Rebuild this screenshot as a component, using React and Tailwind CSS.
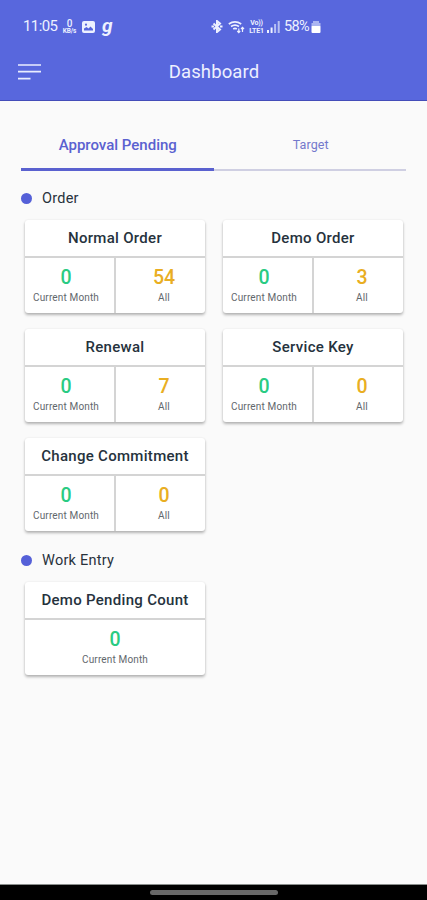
import React, { useState } from 'react';

const ORDERS = [
    { id: 'normal', title: 'Normal Order', current: 0, all: 54 },
    { id: 'demo', title: 'Demo Order', current: 0, all: 3 },
    { id: 'renewal', title: 'Renewal', current: 0, all: 7 },
    { id: 'service', title: 'Service Key', current: 0, all: 0 },
    { id: 'commitment', title: 'Change Commitment', current: 0, all: 0 },
];

const WORK_ENTRIES = [
    { id: 'demo-pending', title: 'Demo Pending Count', current: 0 },
];

export default function App() {
    const [tab, setTab] = useState('approval');

    return (
        <div className="flex h-[900px] w-[427px] flex-col overflow-hidden bg-[#fafafa] font-['Roboto',sans-serif]">
            <header className="h-[101px] shrink-0 border-b border-[#444db9] bg-[#5867dd]">
                <StatusBar />
                <div className="grid h-11 grid-cols-[1fr_auto_1fr] items-center px-[18px]">
                    <button aria-label="Menu" className="w-6">
                        <svg width="24" height="18" viewBox="0 0 24 18" fill="none" stroke="#e9edff" strokeWidth="1.7">
                            <path d="M0 2h23M0 8.7h23M0 15.7h12.5" />
                        </svg>
                    </button>
                    <h1 className="pt-[2px] pl-px text-[18.5px] tracking-[0.1px] text-[#edf0ff]">Dashboard</h1>
                </div>
            </header>

            <main className="flex-1 px-[21px] pt-[20px]">
                <nav className="flex h-[50px]">
                    <Tab label="Approval Pending" active={tab === 'approval'} onClick={() => setTab('approval')} />
                    <Tab label="Target" active={tab === 'target'} onClick={() => setTab('target')} />
                </nav>

                <SectionTitle label="Order" className="mt-[17px]" />
                <div className="mt-[12px] grid grid-cols-[180px_180px] gap-x-[18px] gap-y-[16px] pl-1">
                    {ORDERS.map(item => <CountCard key={item.id} item={item} />)}
                </div>

                <SectionTitle label="Work Entry" className="mt-[19px]" />
                <div className="mt-[12px] grid grid-cols-[180px_180px] gap-x-[18px] pl-1">
                    {WORK_ENTRIES.map(item => <CountCard key={item.id} item={item} />)}
                </div>
            </main>

            <footer className="flex h-4 shrink-0 justify-center border-t border-[#8a8e8c] bg-black pt-[5px]">
                <div className="h-[5px] w-[128px] rounded-full bg-[#686868]" />
            </footer>
        </div>
    );
}

function Tab({ label, active, onClick }) {
    return (
        <button onClick={onClick} className="flex flex-1 flex-col justify-end">
            <span
                className={`flex w-full flex-1 items-center justify-center ${
                    active
                        ? 'pt-px pl-px text-[15px] font-medium text-[#5a61d0]'
                        : 'pl-[2px] text-[12.5px] tracking-[0.1px] text-[#7479cc]'
                }`}
            >
                {label}
            </span>
            <span className={`w-full ${active ? 'h-[3px] bg-[#5a61cf]' : 'h-[2px] bg-[#cfcfe2]'}`} />
        </button>
    );
}

function SectionTitle({ label, className }) {
    return (
        <div className={`flex h-5 items-center gap-[10px] ${className}`}>
            <span className="mt-px size-[11px] rounded-full bg-[#5560d8]" />
            <h2 className="pt-[2px] text-[14.5px] tracking-[0.25px] text-[#28323c]">{label}</h2>
        </div>
    );
}

function CountCard({ item }) {
    const split = item.all !== undefined;

    return (
        <section className="flex h-[93px] flex-col rounded-[3px] bg-white shadow-[0_2px_3px_rgba(0,0,0,0.28),0_0_2px_rgba(0,0,0,0.08)]">
            <h3 className="flex h-9 items-center justify-center pt-px text-[15px] font-medium tracking-[0.3px] whitespace-nowrap text-[#26323d]">
                {item.title}
            </h3>
            <div className="flex flex-1 border-t-2 border-[#d4d4d4]">
                <Count value={item.current} label="Current Month" color="text-[#2acb82]" className={split ? 'pr-[7px]' : ''} />
                {split && (
                    <>
                        <div className="w-[2px] bg-[#d4d4d4]" />
                        <Count value={item.all} label="All" color="text-[#e9ae22]" className="pl-[7px]" />
                    </>
                )}
            </div>
        </section>
    );
}

function Count({ value, label, color, className }) {
    return (
        <div className={`flex flex-1 flex-col items-center pt-[8px] ${className}`}>
            <span className={`text-[19.5px] leading-[24px] font-medium ${color}`}>{value}</span>
            <span className="text-[10px] leading-[15px] tracking-[0.15px] whitespace-nowrap text-[#62676c]">{label}</span>
        </div>
    );
}

function StatusBar() {
    return (
        <div className="flex h-[50px] items-center pt-[3px] pl-[23px] text-[#edf1ff]">
            <span className="w-[34px] text-[15px] tracking-[-0.6px]">11:05</span>
            <span className="ml-[5px] flex w-[15px] flex-col items-center font-bold">
                <span className="text-[10px] leading-[9px] font-medium">0</span>
                <span className="text-[6.5px] leading-[7px] tracking-[-0.1px]">KB/s</span>
            </span>
            <svg className="ml-[5px]" width="13" height="12" viewBox="0 0 13 12">
                <rect width="13" height="12" rx="2" fill="#edf1ff" />
                <path d="M2 9.5V7.5l2.6-1.5L6.5 7.5l2-2L11 8v1.5z" fill="#5867dd" />
                <circle cx="4" cy="3.7" r="1.1" fill="#5867dd" />
            </svg>
            <span className="ml-[7px] w-[12px] pb-[2px] text-[19px] leading-none font-bold italic">g</span>

            <svg className="ml-[97px]" width="12" height="13" viewBox="0 0 12 13" fill="none" stroke="#edf1ff">
                <path d="M2.5 3.5l6.5 6L6 12V1l3 2.5-6.5 6" strokeWidth="2" />
                <path d="M.5 6.5h2.5M9 6.5h2.5" strokeWidth="2" />
            </svg>
            <svg className="ml-[5px]" width="17" height="14" viewBox="0 0 17 14" fill="none" stroke="#edf1ff">
                <path d="M.8 4Q7-.4 13.2 4M3 6.5q4-2.8 8 0M5.2 9q1.8-1.2 3.6 0" strokeWidth="1.7" />
                <path d="M10.8 12.5v-4M9.3 11l1.5 1.7 1.4-1.7M14.5 12V7.5M13 9l1.5-1.6L16 9" strokeWidth="1.2" />
            </svg>
            <span className="ml-[3px] flex w-[17px] flex-col items-center text-[7px] leading-[8px] font-bold tracking-[-0.2px]">
                <span>Vo))</span>
                <span>LTE1</span>
            </span>
            <svg className="ml-[2px]" width="13" height="13" viewBox="0 0 13 13" fill="#edf1ff">
                <path d="M0 10h2v3H0zM3.6 7.5h2V13h-2z" />
                <path d="M7.1 4h2v9h-2zM10.7 1h2v12h-2z" opacity="0.65" />
            </svg>
            <span className="ml-[4px] w-[26px] text-[14.5px] tracking-[-0.7px]">58%</span>
            <svg className="ml-px" width="10" height="13" viewBox="0 0 10 13">
                <path d="M2 1h6v2h1.5v4H.5V3H2z" fill="#aab4f1" />
                <rect x="0.5" y="6" width="9" height="7" rx="1" fill="#fff" />
            </svg>
        </div>
    );
}
